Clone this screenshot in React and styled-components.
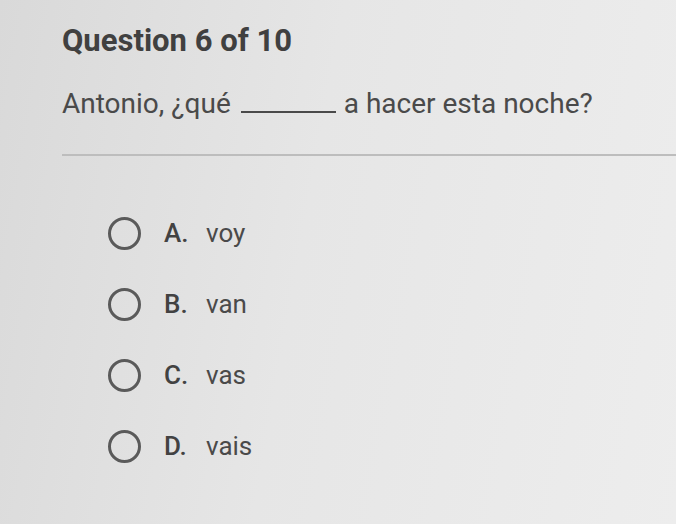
import styled, { createGlobalStyle } from "styled-components";

const GlobalStyle = createGlobalStyle`
  html, body {
    margin: 0;
    padding: 0;
  }
  body {
    font-family: Roboto, "Liberation Sans", sans-serif;
    background: #e2e2e2;
  }
`;

const Page = styled.div`
  width: 676px;
  height: 524px;
  overflow: hidden;
  background: linear-gradient(100deg, #d9d9d9 0%, #e6e6e6 45%, #ededed 100%);
  padding: 22px 0 0 62px;
  box-sizing: border-box;
  color: #454545;
`;

const Title = styled.h1`
  margin: 0;
  font-size: 31px;
  font-weight: 700;
  line-height: 38px;
  color: #404040;
`;

const Prompt = styled.p`
  margin: 27px 0 0;
  font-size: 28px;
  line-height: 34px;
  color: #4a4a4a;
  display: flex;
  align-items: baseline;
`;

const Blank = styled.span`
  display: inline-block;
  width: 95px;
  margin: 0 8px 0 10px;
  border-bottom: 2px solid #4a4a4a;
`;

const Divider = styled.hr`
  margin: 33px 0 0;
  border: none;
  border-top: 2px solid #bdbdbd;
`;

const Options = styled.ul`
  list-style: none;
  margin: 60px 0 0;
  padding: 0 0 0 46px;
  display: flex;
  flex-direction: column;
  gap: 37px;
`;

const Option = styled.li`
  display: flex;
  align-items: center;
  height: 34px;
  font-size: 26px;
  color: #4a4a4a;
`;

const Radio = styled.span`
  width: 27px;
  height: 27px;
  border: 3.5px solid #5a5a5a;
  border-radius: 50%;
  margin-right: 23px;
  flex-shrink: 0;
`;

const Letter = styled.span`
  font-weight: 500;
  color: #424242;
  width: 42px;
`;

const options = [
  ["A.", "voy"],
  ["B.", "van"],
  ["C.", "vas"],
  ["D.", "vais"],
];

export default function App() {
  return (
    <Page>
      <GlobalStyle />
      <Title>Question 6 of 10</Title>
      <Prompt>
        Antonio, ¿qué
        <Blank />
        a hacer esta noche?
      </Prompt>
      <Divider />
      <Options>
        {options.map(([letter, text]) => (
          <Option key={letter}>
            <Radio />
            <Letter>{letter}</Letter>
            {text}
          </Option>
        ))}
      </Options>
    </Page>
  );
}
